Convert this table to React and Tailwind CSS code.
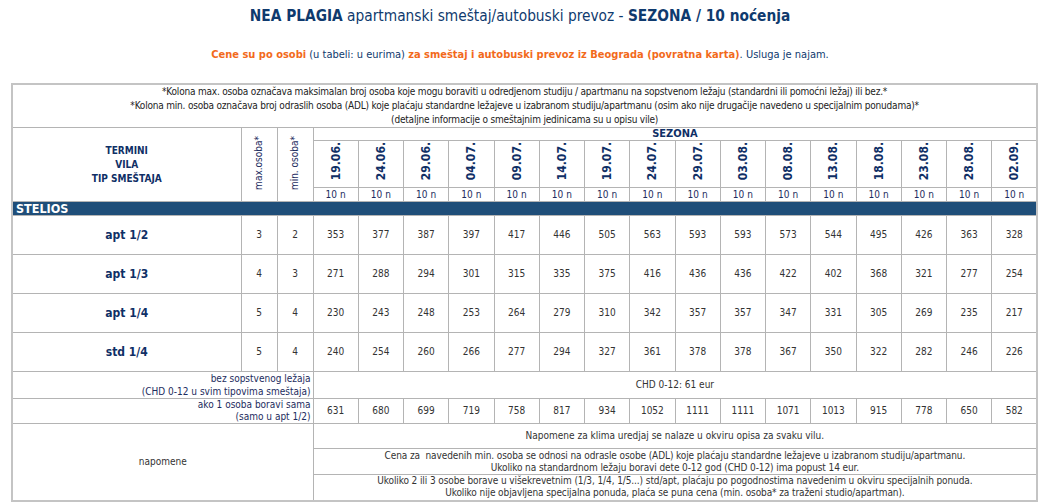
const dates = ["19.06.", "24.06.", "29.06.", "04.07.", "09.07.", "14.07.", "19.07.", "24.07.", "29.07.", "03.08.", "08.08.", "13.08.", "18.08.", "23.08.", "28.08.", "02.09."];

const rows = [
  { name: "apt 1/2", max: 3, min: 2, prices: [353, 377, 387, 397, 417, 446, 505, 563, 593, 593, 573, 544, 495, 426, 363, 328] },
  { name: "apt 1/3", max: 4, min: 3, prices: [271, 288, 294, 301, 315, 335, 375, 416, 436, 436, 422, 402, 368, 321, 277, 254] },
  { name: "apt 1/4", max: 5, min: 4, prices: [230, 243, 248, 253, 264, 279, 310, 342, 357, 357, 347, 331, 305, 269, 235, 217] },
  { name: "std 1/4", max: 5, min: 4, prices: [240, 254, 260, 266, 277, 294, 327, 361, 378, 378, 367, 350, 322, 282, 246, 226] },
];

const single = [631, 680, 699, 719, 758, 817, 934, 1052, 1111, 1111, 1071, 1013, 915, 778, 650, 582];

const cell = "border border-[#b4b4b4] p-0 text-center align-middle";

export default function App() {
  return (
    <div className="w-[1040px] h-[503px] overflow-hidden bg-white font-['DejaVu_Sans_Condensed','DejaVu_Sans',sans-serif] text-[#1d2c5e]">
      <div className="h-[34px] pt-[6px] text-center text-[15.3px] leading-[20px] text-[#0f3a6e]">
        <span className="font-bold">NEA PLAGIA</span> apartmanski smeštaj/autobuski prevoz - <span className="font-bold">SEZONA / 10 noćenja</span>
      </div>
      <div className="h-[42px] pt-[13px] text-center text-[11px] leading-[15px] text-[#0f3a6e]">
        <span className="font-bold text-[#f26a1b]">Cene su po osobi</span> (u tabeli: u eurima) <span className="font-bold text-[#f26a1b]">za smeštaj i autobuski prevoz iz Beograda (povratna karta)</span>. Usluga je najam.
      </div>
      <table className="ml-[11px] mt-[7px] w-[1025px] table-fixed border-collapse border-2 border-[#c4c4c4] text-[10px] leading-[12px]">
        <colgroup>
          <col className="w-[229px]" />
          <col className="w-[36px]" />
          <col className="w-[36px]" />
          {dates.map((d) => (
            <col key={d} className="w-[45.25px]" />
          ))}
        </colgroup>
        <tbody>
          <tr className="h-[43px]">
            <td colSpan={19} className={`${cell} text-[#222] leading-[14px] tracking-[-0.2px]`}>
              *Kolona max. osoba označava maksimalan broj osoba koje mogu boraviti u odredjenom studiju / apartmanu na sopstvenom ležaju (standardni ili pomoćni ležaj) ili bez.*
              <br />
              *Kolona min. osoba označava broj odraslih osoba (ADL) koje plaćaju standardne ležajeve u izabranom studiju/apartmanu (osim ako nije drugačije navedeno u specijalnim ponudama)*
              <br />
              (detaljne informacije o smeštajnim jedinicama su u opisu vile)
            </td>
          </tr>
          <tr className="h-[13px]">
            <td rowSpan={3} className={`${cell} font-bold text-[#0f2f66] leading-[14px]`}>
              TERMINI
              <br />
              VILA
              <br />
              TIP SMEŠTAJA
            </td>
            <td rowSpan={3} className={cell}>
              <span className="inline-block [writing-mode:vertical-rl] rotate-180 leading-[12px]">max.osoba*</span>
            </td>
            <td rowSpan={3} className={cell}>
              <span className="inline-block [writing-mode:vertical-rl] rotate-180 leading-[12px]">min. osoba*</span>
            </td>
            <td colSpan={16} className={`${cell} font-bold text-[#0f2f66] leading-[12px] text-[11px]`}>
              SEZONA
            </td>
          </tr>
          <tr className="h-[47px]">
            {dates.map((d) => (
              <td key={d} className={cell}>
                <span className="inline-block [writing-mode:vertical-rl] rotate-180 text-[12px] leading-[14px] font-bold text-[#0f2f66] pt-[3px]">{d}</span>
              </td>
            ))}
          </tr>
          <tr className="h-[14px]">
            {dates.map((d) => (
              <td key={d} className={`${cell} leading-[13px]`}>
                10 n
              </td>
            ))}
          </tr>
          <tr className="h-[14px] bg-[#1f4e79]">
            <td colSpan={19} className="border border-[#b4b4b4] p-0 pl-[3px] text-left text-[12.5px] leading-[13px] font-bold text-white">
              STELIOS
            </td>
          </tr>
          {rows.map((r) => (
            <tr key={r.name} className="h-[39px]">
              <td className={`${cell} text-[12px] font-bold text-[#0f2f66]`}>{r.name}</td>
              <td className={`${cell} text-[#333]`}>{r.max}</td>
              <td className={`${cell} text-[#333]`}>{r.min}</td>
              {r.prices.map((p, i) => (
                <td key={i} className={`${cell} text-[#333]`}>
                  {p}
                </td>
              ))}
            </tr>
          ))}
          <tr className="h-[27px]">
            <td colSpan={3} className={`${cell} text-right pr-[2px] leading-[13px]`}>
              bez sopstvenog ležaja
              <br />
              (CHD 0-12 u svim tipovima smeštaja)
            </td>
            <td colSpan={16} className={`${cell} text-[#333]`}>
              CHD 0-12: 61 eur
            </td>
          </tr>
          <tr className="h-[25px]">
            <td colSpan={3} className={`${cell} text-right pr-[2px] leading-[12px]`}>
              ako 1 osoba boravi sama
              <br />
              (samo u apt 1/2)
            </td>
            {single.map((p, i) => (
              <td key={i} className={`${cell} text-[#333]`}>
                {p}
              </td>
            ))}
          </tr>
          <tr className="h-[25px]">
            <td colSpan={3} rowSpan={3} className={`${cell} text-[#333]`}>
              napomene
            </td>
            <td colSpan={16} className={`${cell} text-[#333]`}>
              Napomene za klima uredjaj se nalaze u okviru opisa za svaku vilu.
            </td>
          </tr>
          <tr className="h-[26px]">
            <td colSpan={16} className={`${cell} text-[#333] tracking-[-0.1px]`}>
              Cena za&nbsp; navedenih min. osoba se odnosi na odrasle osobe (ADL) koje plaćaju standardne ležajeve u izabranom studiju/apartmanu.
              <br />
              Ukoliko na standardnom ležaju boravi dete 0-12 god (CHD 0-12) ima popust 14 eur.
            </td>
          </tr>
          <tr className="h-[26px]">
            <td colSpan={16} className={`${cell} text-[#333] tracking-[-0.1px]`}>
              Ukoliko 2 ili 3 osobe borave u višekrevetnim (1/3, 1/4, 1/5...) std/apt, plaćaju po pogodnostima navedenim u okviru specijalnih ponuda.
              <br />
              Ukoliko nije objavljena specijalna ponuda, plaća se puna cena (min. osoba* za traženi studio/apartman).
            </td>
          </tr>
        </tbody>
      </table>
    </div>
  );
}
